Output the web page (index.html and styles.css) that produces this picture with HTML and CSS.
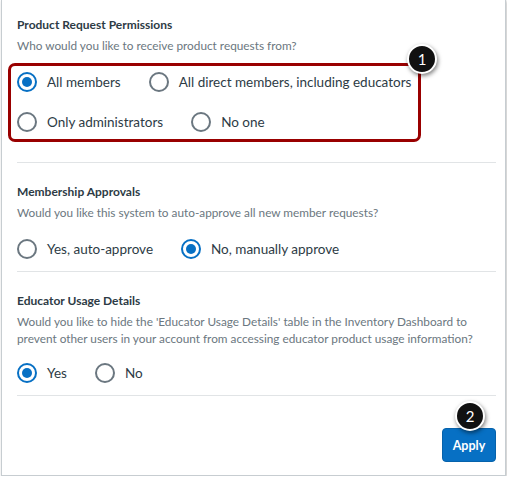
FILE: index.html
```html
<!DOCTYPE html>
<html lang="en">
<head>
  <meta charset="UTF-8">
  <meta name="viewport" content="width=device-width, initial-scale=1.0">
  <title>Product Request Settings</title>
  <link rel="stylesheet" href="styles.css">
</head>
<body>

  <div class="panel">

    <!-- Product requests -->
    <div class="section">
      <h3 class="section-title">Product Request Permissions</h3>
      <p class="section-desc">Who would you like to receive product requests from?</p>
      <div class="option-box">
        <div class="option-row">
          <label class="radio checked"><span class="radio-dot"></span>All members</label>
          <label class="radio"><span class="radio-dot"></span>All direct members, including educators</label>
        </div>
        <div class="option-row">
          <label class="radio"><span class="radio-dot"></span>Only administrators</label>
          <label class="radio"><span class="radio-dot"></span>No one</label>
        </div>
        <span class="badge badge-box">1</span>
      </div>
    </div>

    <!-- Membership -->
    <div class="section">
      <h3 class="section-title">Membership Approvals</h3>
      <p class="section-desc">Would you like this system to auto-approve all new member requests?</p>
      <div class="option-row plain">
        <label class="radio"><span class="radio-dot"></span>Yes, auto-approve</label>
        <label class="radio checked"><span class="radio-dot"></span>No, manually approve</label>
      </div>
    </div>

    <!-- Usage details -->
    <div class="section">
      <h3 class="section-title">Educator Usage Details</h3>
      <p class="section-desc multi">Would you like to hide the 'Educator Usage Details' table in the Inventory Dashboard to prevent other users in your account from accessing educator product usage information?</p>
      <div class="option-row plain">
        <label class="radio checked"><span class="radio-dot"></span>Yes</label>
        <label class="radio"><span class="radio-dot"></span>No</label>
      </div>
    </div>

    <div class="footer">
      <button class="apply-btn">Apply<span class="badge badge-btn">2</span></button>
    </div>

  </div>

</body>
</html>
```

FILE: styles.css
```css
body {
  margin: 0;
  background: #fff;
  font-family: Lato, "Noto Sans", sans-serif;
  color: #2d3b45;
}

.panel {
  width: 503px;
  margin-left: 1px;
  padding-top: 16px;
  padding-bottom: 13px;
  border: 1px solid #c7cdd1;
  border-top: none;
  box-shadow: 1px 1px 3px rgba(0, 0, 0, 0.25);
  background: #fff;
}

.section {
  margin: 0 9px 0 15px;
  padding: 20px 0 10px;
  border-bottom: 1px solid #e1e4e6;
}

.section:first-child {
  padding-top: 0;
  padding-bottom: 20px;
}

.section-title {
  margin: 0;
  font-size: 12px;
  line-height: 18px;
  font-weight: bold;
}

.section-desc {
  margin: 3px 0 0;
  font-size: 11.8px;
  line-height: 18px;
  color: #6b7780;
}

.section-desc.multi {
  padding-right: 10px;
  line-height: 17px;
}

/* highlighted group */
.option-box {
  position: relative;
  width: 401px;
  margin: 8px 0 0 -9px;
  padding: 4px 0 5px 6px;
  border: 3px solid #990000;
  border-radius: 7px;
  display: flex;
  flex-direction: column;
  gap: 16px;
}

.option-row {
  display: flex;
  gap: 28px;
}

.option-row.plain {
  margin-top: 15px;
}

.multi + .option-row.plain {
  margin-top: 14px;
}

.radio {
  display: flex;
  align-items: center;
  gap: 10px;
  height: 24px;
  font-size: 13.5px;
  white-space: nowrap;
}

.radio-dot {
  flex: none;
  width: 20px;
  height: 20px;
  box-sizing: border-box;
  border: 2px solid #6b7780;
  border-radius: 50%;
  position: relative;
}

.radio.checked .radio-dot {
  border-color: #0770c4;
}

.radio.checked .radio-dot::after {
  content: "";
  position: absolute;
  top: 3px;
  left: 3px;
  width: 10px;
  height: 10px;
  border-radius: 50%;
  background: #0770c4;
}

.footer {
  display: flex;
  justify-content: flex-end;
  padding: 32px 9px 0 0;
}

.apply-btn {
  position: relative;
  width: 54px;
  height: 34px;
  border: 1px solid #0662ab;
  border-radius: 4px;
  background: #0770c4;
  color: #fff;
  font-family: Lato, "Noto Sans", sans-serif;
  font-size: 12.5px;
  font-weight: bold;
  padding: 0;
}

/* numbered callouts */
.badge {
  position: absolute;
  width: 26px;
  height: 26px;
  border: 2px solid #fff;
  border-radius: 50%;
  background: #111;
  color: #fff;
  font-size: 15px;
  font-weight: normal;
  line-height: 26px;
  text-align: center;
  box-shadow: 1px 2px 4px rgba(0, 0, 0, 0.5);
}

.badge-box {
  top: -22px;
  right: -19px;
}

.badge-btn {
  top: -28px;
  left: 12px;
}
```
